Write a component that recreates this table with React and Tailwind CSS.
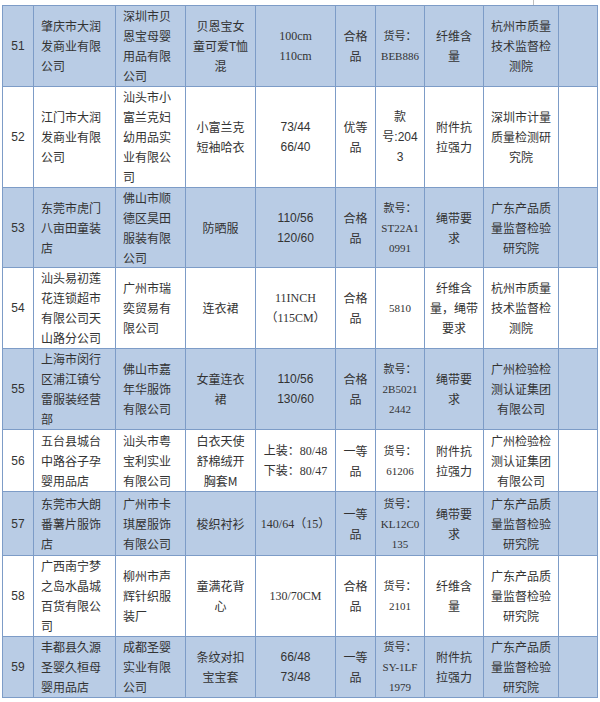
import React from "react";

const SANS = "font-['Liberation_Sans','Noto_Sans_CJK_SC',sans-serif]";
const CJK = "font-['Noto_Sans_CJK_SC',sans-serif]";
const SERIF = "font-['Liberation_Serif','Noto_Sans_CJK_SC',serif]";

const widths = ["w-[31px]", "w-[82px]", "w-[70px]", "w-[70px]", "w-[80px]", "w-[40px]", "w-[49px]", "w-[59px]", "w-[75px]", "w-[39px]"];

// each cell: [lines, fontClass]
const rows = [
  {
    n: "51", h: "h-[81px]", blue: true,
    c2: ["肇庆市大润", "发商业有限", "公司"],
    c3: ["深圳市贝", "恩宝母婴", "用品有限", "公司"],
    c4: ["贝恩宝女", "童可爱T恤", "混"],
    c5: [["100cm", "110cm"], SERIF],
    c6: ["合格", "品"],
    c7: [["货号：", "BEB886"], SERIF],
    c8: ["纤维含", "量"],
    c9: ["杭州市质量", "技术监督检", "测院"],
  },
  {
    n: "52", h: "h-[101px]", blue: false,
    c2: ["江门市大润", "发商业有限", "公司"],
    c3: ["汕头市小", "富兰克妇", "幼用品实", "业有限公", "司"],
    c4: ["小富兰克", "短袖哈衣"],
    c5: [["73/44", "66/40"], SANS],
    c6: ["优等", "品"],
    c7: [["款", "号:204", "3"], SANS],
    c8: ["附件抗", "拉强力"],
    c9: ["深圳市计量", "质量检测研", "究院"],
  },
  {
    n: "53", h: "h-[80px]", blue: true,
    c2: ["东莞市虎门", "八亩田童装", "店"],
    c3: ["佛山市顺", "德区昊田", "服装有限", "公司"],
    c4: ["防晒服"],
    c5: [["110/56", "120/60"], SANS],
    c6: ["合格", "品"],
    c7: [["款号：", "ST22A1", "0991"], SERIF],
    c8: ["绳带要", "求"],
    c9: ["广东产品质", "量监督检验", "研究院"],
  },
  {
    n: "54", h: "h-[81px]", blue: false,
    c2: ["汕头易初莲", "花连锁超市", "有限公司天", "山路分公司"],
    c3: ["广州市瑞", "奕贸易有", "限公司"],
    c4: ["连衣裙"],
    c5: [["11INCH", "（115CM）"], SERIF],
    c6: ["合格", "品"],
    c7: [["5810"], SERIF],
    c8: ["纤维含", "量，绳带", "要求"],
    c9: ["杭州市质量", "技术监督检", "测院"],
  },
  {
    n: "55", h: "h-[81px]", blue: true,
    c2: ["上海市闵行", "区浦江镇兮", "雷服装经营", "部"],
    c3: ["佛山市嘉", "年华服饰", "有限公司"],
    c4: ["女童连衣", "裙"],
    c5: [["110/56", "130/60"], SANS],
    c6: ["合格", "品"],
    c7: [["款号：", "2B5021", "2442"], SERIF],
    c8: ["绳带要", "求"],
    c9: ["广州检验检", "测认证集团", "有限公司"],
  },
  {
    n: "56", h: "h-[62px]", blue: false,
    c2: ["五台县城台", "中路谷子孕", "婴用品店"],
    c3: ["汕头市粤", "宝利实业", "有限公司"],
    c4: ["白衣天使", "舒棉绒开", "胸套M"],
    c5: [["上装：80/48", "下装：80/47"], SERIF],
    c6: ["一等", "品"],
    c7: [["货号：", "61206"], SERIF],
    c8: ["附件抗", "拉强力"],
    c9: ["广州检验检", "测认证集团", "有限公司"],
  },
  {
    n: "57", h: "h-[64px]", blue: true,
    c2: ["东莞市大朗", "番薯片服饰", "店"],
    c3: ["广州市卡", "琪屋服饰", "有限公司"],
    c4: ["梭织衬衫"],
    c5: [["140/64（15）"], SERIF],
    c6: ["一等", "品"],
    c7: [["货号：", "KL12C0", "135"], SERIF],
    c8: ["绳带要", "求"],
    c9: ["广东产品质", "量监督检验", "研究院"],
  },
  {
    n: "58", h: "h-[81px]", blue: false,
    c2: ["广西南宁梦", "之岛水晶城", "百货有限公", "司"],
    c3: ["柳州市声", "辉针织服", "装厂"],
    c4: ["童满花背", "心"],
    c5: [["130/70CM"], SERIF],
    c6: ["合格", "品"],
    c7: [["货号：", "2101"], SERIF],
    c8: ["纤维含", "量"],
    c9: ["广东产品质", "量监督检验", "研究院"],
  },
  {
    n: "59", h: "h-[61px]", blue: true,
    c2: ["丰都县久源", "圣婴久桓母", "婴用品店"],
    c3: ["成都圣婴", "实业有限", "公司"],
    c4: ["条纹对扣", "宝宝套"],
    c5: [["66/48", "73/48"], SANS],
    c6: ["一等", "品"],
    c7: [["货号：", "SY-1LF", "1979"], SERIF],
    c8: ["附件抗", "拉强力"],
    c9: ["广东产品质", "量监督检验", "研究院"],
  },
];

function Cell({ w, lines, font = CJK, align = "center", size = "text-[12px]" }) {
  return (
    <div
      className={`${w} shrink-0 h-full border-r border-[#7d9cc7] flex flex-col justify-center overflow-visible ${
        align === "left" ? "items-start pl-[7px]" : "items-center"
      } ${font} ${size} leading-[20px] text-[#333333] whitespace-nowrap`}
    >
      {lines.map((l, i) => (
        <div key={i}>{l}</div>
      ))}
    </div>
  );
}

export default function App() {
  return (
    <div className="w-[600px] h-[702px] bg-white">
      <div className="h-[5px] pl-[533px]">
        <div className="w-px h-full bg-[#bfbfbf]" />
      </div>
      <div className="ml-[2px] w-[596px] border-l border-t border-[#7d9cc7]">
        {rows.map((r) => (
          <div
            key={r.n}
            className={`flex ${r.h} border-b border-[#7d9cc7] ${r.blue ? "bg-[#b9cce5]" : "bg-white"}`}
          >
            <Cell w={widths[0]} lines={[r.n]} font={SANS} />
            <Cell w={widths[1]} lines={r.c2} align="left" />
            <Cell w={widths[2]} lines={r.c3} align="left" />
            <Cell w={widths[3]} lines={r.c4} />
            <Cell w={widths[4]} lines={r.c5[0]} font={r.c5[1]} size={r.c5[1] === SERIF ? "text-[12px]" : "text-[12px]"} />
            <Cell w={widths[5]} lines={r.c6} />
            <Cell w={widths[6]} lines={r.c7[0]} font={r.c7[1]} size={r.c7[1] === SERIF ? "text-[11px]" : "text-[12px]"} />
            <Cell w={widths[7]} lines={r.c8} />
            <Cell w={widths[8]} lines={r.c9} />
            <Cell w={widths[9]} lines={[]} />
          </div>
        ))}
      </div>
    </div>
  );
}
